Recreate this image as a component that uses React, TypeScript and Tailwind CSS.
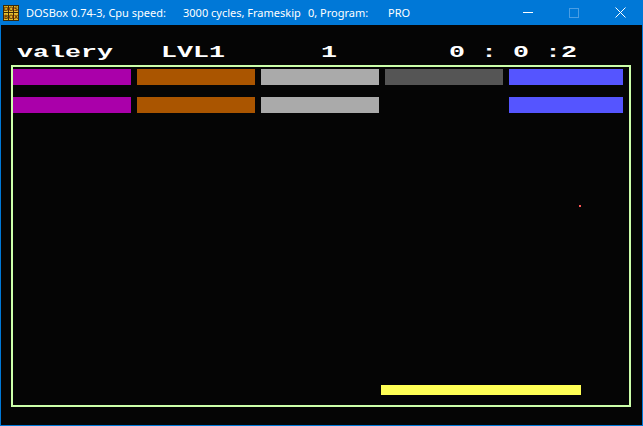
import React from "react";

const bricks: (string | null)[][] = [
  ["bg-[#aa00aa]", "bg-[#aa5500]", "bg-[#aaaaaa]", "bg-[#555555]", "bg-[#5555ff]"],
  ["bg-[#aa00aa]", "bg-[#aa5500]", "bg-[#aaaaaa]", null, "bg-[#5555ff]"],
];

const DosIcon: React.FC = () => (
  <div className="w-4 h-4 bg-[#3a2a08] grid grid-cols-3 grid-rows-2 gap-px p-px">
    {"DOSBOX".split("").map((c, i) => (
      <span
        key={i}
        className="bg-[#e8c030] text-[#6b3a00] text-[6px] leading-[7px] font-bold flex items-center justify-center"
        style={{ fontFamily: "'DejaVu Sans', sans-serif" }}
      >
        {c}
      </span>
    ))}
  </div>
);

const TitleBar: React.FC = () => (
  <div
    className="h-[25px] bg-[#0078d7] flex items-center text-white text-[11px] leading-none"
    style={{ fontFamily: "'Noto Sans', sans-serif" }}
  >
    <div className="ml-[3px] mr-[7px]">
      <DosIcon />
    </div>
    <span className="w-[157px] whitespace-nowrap">DOSBox 0.74-3, Cpu speed:</span>
    <span className="w-[125px] whitespace-nowrap">3000 cycles, Frameskip</span>
    <span className="w-[80px] whitespace-nowrap">0, Program:</span>
    <span className="whitespace-nowrap">PRO</span>
    <div className="ml-auto flex h-full">
      <div className="w-[46px] flex items-center justify-center">
        <div className="w-[10px] h-px bg-white" />
      </div>
      <div className="w-[46px] flex items-center justify-center">
        <div className="w-[10px] h-[10px] border border-[#4a9ee4]" />
      </div>
      <div className="w-[46px] flex items-center justify-center">
        <svg width="11" height="11" viewBox="0 0 11 11">
          <path d="M0.5 0.5 L10.5 10.5 M10.5 0.5 L0.5 10.5" stroke="white" strokeWidth="1" />
        </svg>
      </div>
    </div>
  </div>
);

export default function App() {
  return (
    <div className="w-[643px] h-[426px] bg-[#0078d7] flex flex-col overflow-hidden">
      <TitleBar />
      <div className="flex-1 mx-px mb-px bg-[#050505] flex flex-col">
        <div
          className="mt-[19px] h-[17px] text-[17px] leading-[17px] font-bold text-white whitespace-pre origin-left scale-x-[1.5686]"
          style={{ fontFamily: "'Liberation Mono', monospace" }}
        >
          {" valery   LVL1      1       0 : 0 :2"}
        </div>
        <div className="relative mt-[4px] ml-[10px] w-[620px] h-[342px] border-2 border-[#ccffaa] flex flex-col">
          {bricks.map((row, r) => (
            <div key={r} className={`flex gap-[6px] ${r === 0 ? "mt-[2px]" : "mt-[12px]"}`}>
              {row.map((c, i) => (
                <div
                  key={i}
                  className={`h-4 ${i === 4 ? "w-[114px]" : "w-[118px]"} ${c ?? ""}`}
                />
              ))}
            </div>
          ))}
          <div className="flex-1" />
          <div className="ml-[368px] mb-[10px] w-[200px] h-[10px] bg-[#ffff55]" />
          <div className="absolute left-[566px] top-[138px] w-[2px] h-[2px] bg-[#ff5555]" />
        </div>
      </div>
    </div>
  );
}
